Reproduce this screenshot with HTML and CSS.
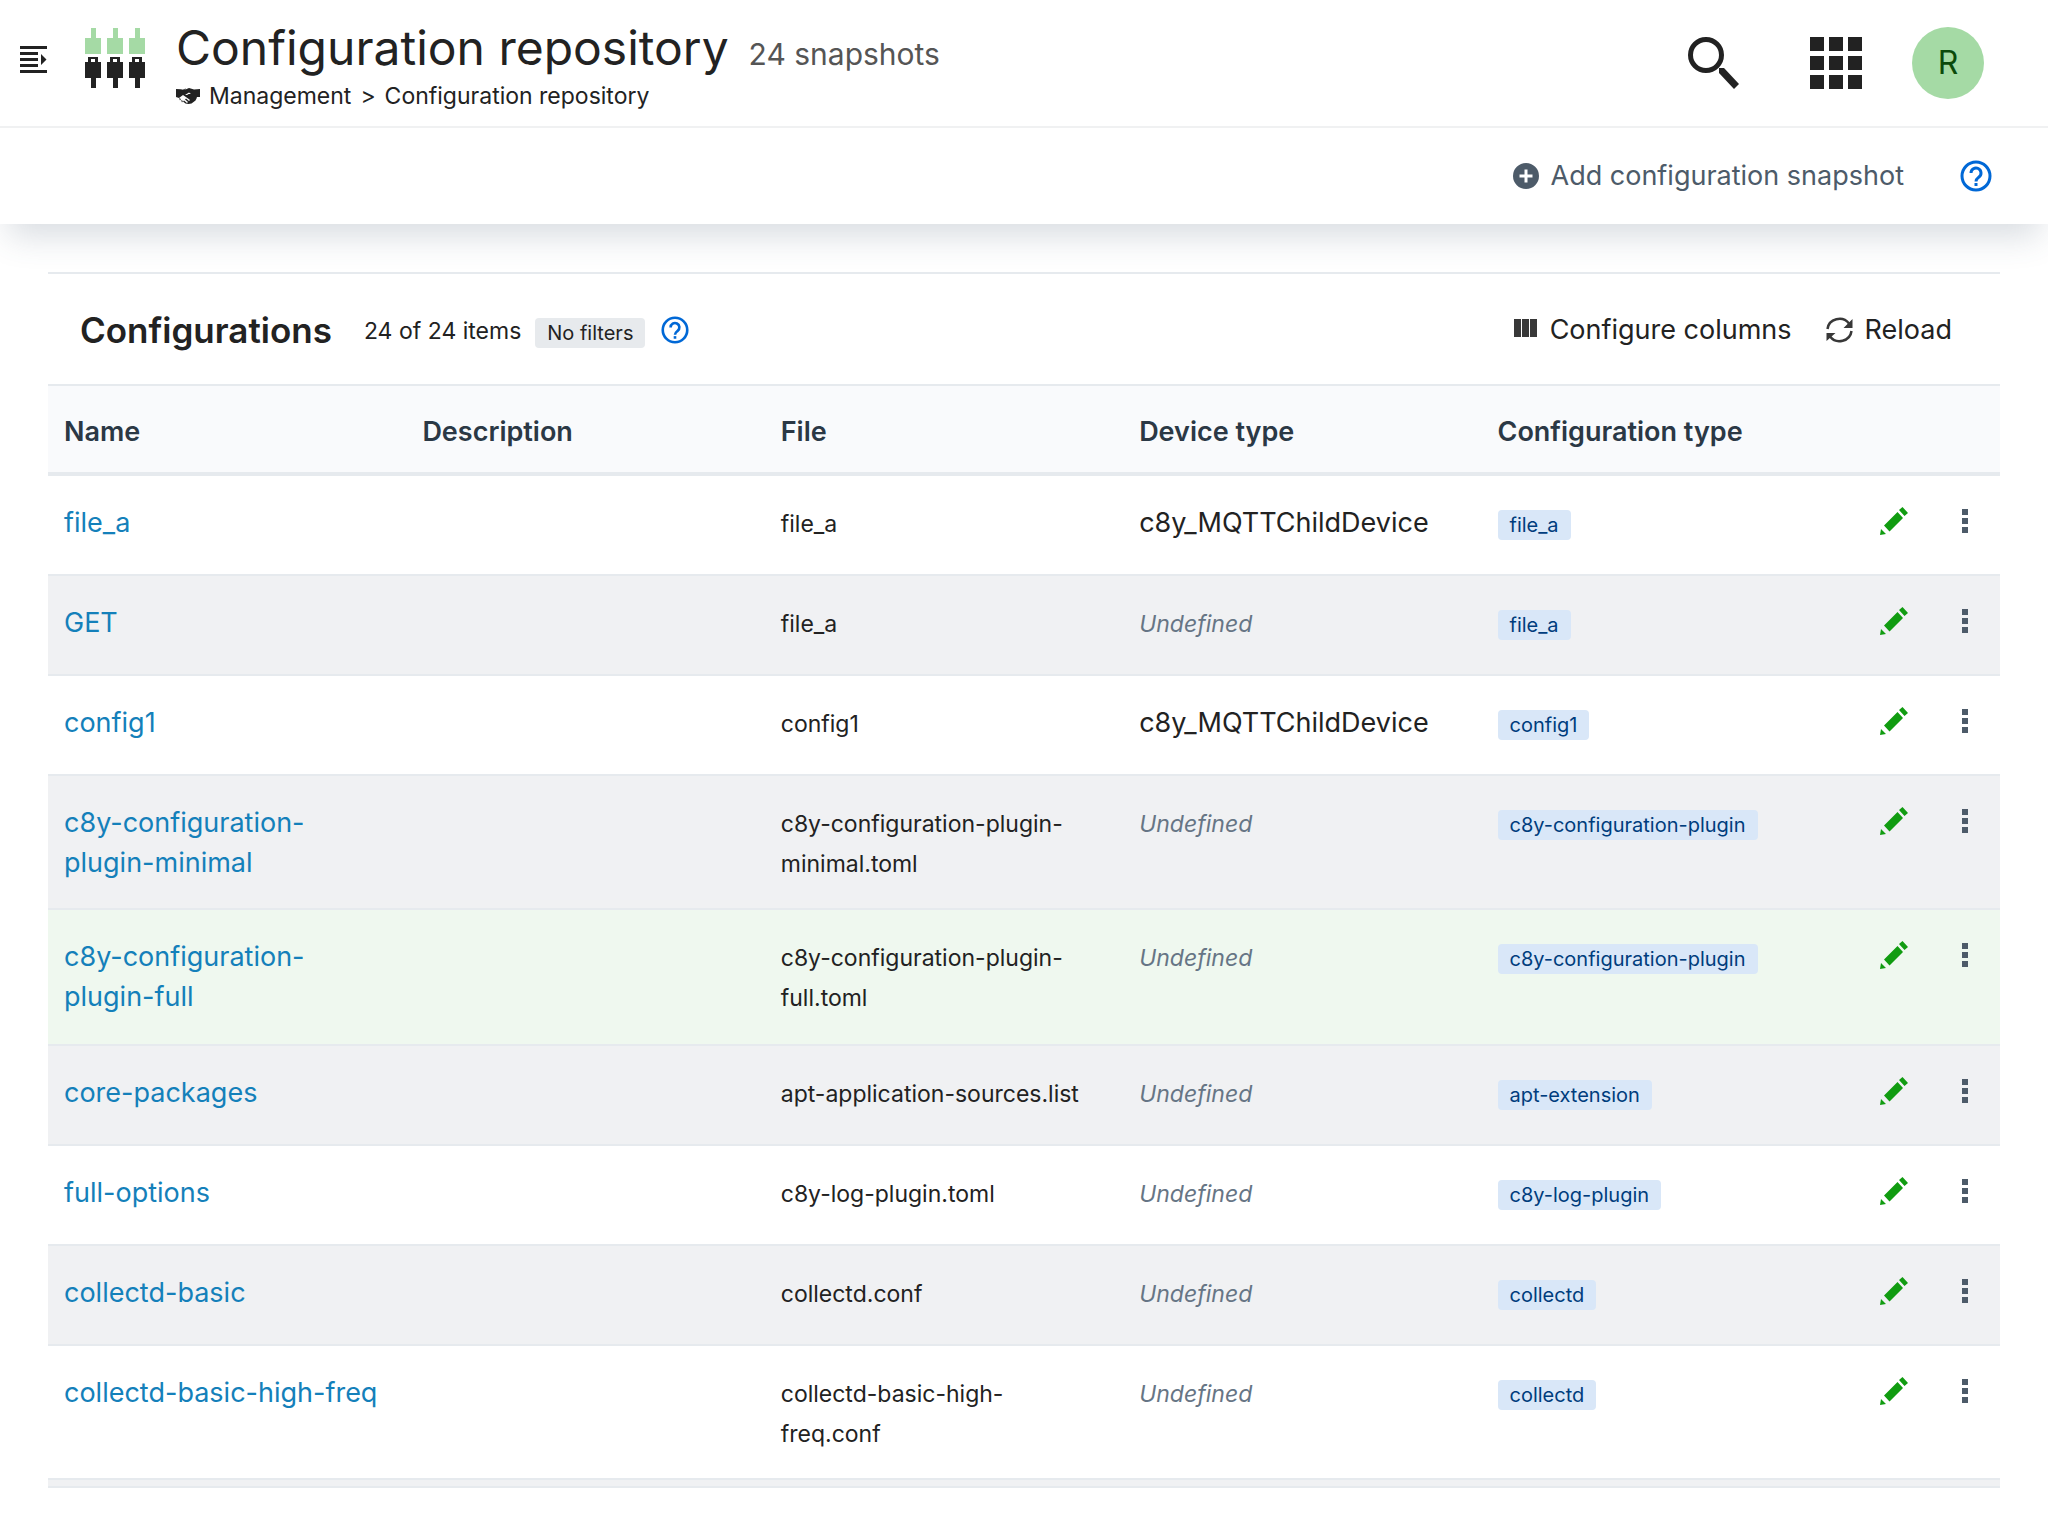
FILE: index.html
```html
<!DOCTYPE html>
<html lang="en">
<head>
<meta charset="utf-8">
<meta name="viewport" content="width=device-width, initial-scale=1">
<title>Configuration repository</title>
<link rel="stylesheet" href="styles.css">
</head>
<body>
<svg class="sprite" aria-hidden="true">
  <symbol id="i-pencil" viewBox="0 0 28 28"><path d="M22.500 0 28 6 24.500 9 19 3zM17.500 5 23 11 9.500 24.500 4 18.500zM1 22 6 27 0 28z"/></symbol>
  <symbol id="i-dots" viewBox="0 0 6 24"><path d="M0 0h6v6H0zM0 9h6v6H0zM0 18h6v6H0z"/></symbol>
  <symbol id="i-help" viewBox="0 0 32 32"><circle cx="16" cy="16" r="14" fill="none" stroke="currentColor" stroke-width="3"/><path d="M11 13a5 5 0 1 1 8 4c-2 1.500-3 2-3 4.500" fill="none" stroke="currentColor" stroke-width="3"/><path d="M14.500 23h3v3h-3z"/></symbol>
</svg>

<header class="top">
  <div class="appbar">
    <button class="icon-btn nav-toggle" aria-label="Toggle navigation">
      <svg width="27" height="27" viewBox="0 0 27 27"><path d="M0 0h27v3H0zM0 6h18v3H0zM0 12h18v3H0zM0 18h18v3H0zM0 24h27v3H0zM21 8l5.500 5.500L21 19z"/></svg>
    </button>
    <svg class="logo" width="61" height="60" viewBox="0 0 61 60" aria-hidden="true">
      <path class="logo-light" d="M6 0h5v10h5v16H0V10h6zM28 0h5v10h5v16H22V10h6zM50 0h5v10h5v16H44V10h6z"/>
      <path fill-rule="evenodd" d="M3 29h10v5h3v16h-5v10H6V50H0V34h3zm3 2v3h4v-3zM25 29h10v5h3v16h-5v10h-5V50h-6V34h3zm3 2v3h4v-3zM47 29h10v5h3v16h-5v10h-5V50h-6V34h3zm3 2v3h4v-3z"/>
    </svg>
    <div class="heading">
      <div class="title-row">
        <h1>Configuration repository</h1>
        <span class="subtitle">24 snapshots</span>
      </div>
      <nav class="crumbs" aria-label="Breadcrumb">
        <svg width="24" height="17" viewBox="0 0 24 17" aria-hidden="true"><path d="M0 1 5 2 10 .5 7 5 9 7l4-2.500 7 5.500 1-1 3 0V1L18 1.500 13 0 9.500 1.500 5 2 0 1v8l3 1 4-3 5 3.500 2 1.500-1 1-3-2.500-1 1 3 2.500-1 1-3-2.500-1 1 2.500 2 3 .5 3-.5 4-3 1.500-3-6-5-4 2.500-3-3L9.500 1.500z"/><path d="M3 10l2 1-1 1.500zM5 12l2 1-1 1.500z"/></svg>
        <span>Management</span><span>&gt;</span><span>Configuration repository</span>
      </nav>
    </div>
    <div class="tools">
      <button class="icon-btn" aria-label="Search">
        <svg width="52" height="52" viewBox="0 0 52 52"><circle cx="18" cy="18" r="15.500" fill="none" stroke="currentColor" stroke-width="5"/><path d="M31 31h5l15 16-5 5-15-16z"/></svg>
      </button>
      <button class="icon-btn" aria-label="Applications">
        <svg width="52" height="52" viewBox="0 0 52 52"><path d="M0 0h14v14H0zM19 0h14v14H19zM38 0h14v14H38zM0 19h14v14H0zM19 19h14v14H19zM38 19h14v14H38zM0 38h14v14H0zM19 38h14v14H19zM38 38h14v14H38z"/></svg>
      </button>
      <button class="avatar" aria-label="User menu">R</button>
    </div>
  </div>
  <div class="actionbar">
    <button class="text-btn add">
      <svg width="26" height="26" viewBox="0 0 26 26" aria-hidden="true"><path fill-rule="evenodd" d="M13 0a13 13 0 1 0 0 26 13 13 0 0 0 0-26zm-1.500 6.500h3v5h5v3h-5v5h-3v-5h-5v-3h5z"/></svg>
      Add configuration snapshot
    </button>
    <button class="icon-btn help" aria-label="Help"><svg width="32" height="32"><use href="#i-help"/></svg></button>
  </div>
</header>

<main class="grid">
  <div class="grid-head">
    <h2>Configurations</h2>
    <span class="count">24 of 24 items</span>
    <span class="tag tag-grey">No filters</span>
    <button class="icon-btn help" aria-label="Filter help"><svg width="28" height="28"><use href="#i-help"/></svg></button>
    <div class="grid-actions">
      <button class="text-btn">
        <svg class="dim" width="24" height="26" viewBox="0 0 24 26" aria-hidden="true"><path d="M0 2h7v18H0zM8 2h7v18H8zM16 2h7v18h-7z"/></svg>
        Configure columns
      </button>
      <button class="text-btn">
        <svg class="dim" width="27" height="26" viewBox="0 0 27 26" aria-hidden="true"><path d="M1.500 12A12 11.500 0 0 1 23 6.500M25.500 14A12 11.500 0 0 1 4 19.500" fill="none" stroke="currentColor" stroke-width="2.500"/><path d="M26.500 2v9h-9zM.5 24v-8h9z"/></svg>
        Reload
      </button>
    </div>
  </div>
  <table>
    <colgroup><col class="c"><col class="c"><col class="c"><col class="c"><col class="c"><col></colgroup>
    <thead><tr><th scope="col">Name</th><th scope="col">Description</th><th scope="col">File</th><th scope="col">Device type</th><th scope="col">Configuration type</th><td></td></tr></thead>
    <tbody>
      <tr><td><a href="#">file_a</a></td><td></td><td class="sm">file_a</td><td>c8y_MQTTChildDevice</td><td><span class="tag">file_a</span></td><td><div class="row-actions"><button class="icon-btn edit" aria-label="Edit"><svg width="28" height="28"><use href="#i-pencil"/></svg></button><button class="icon-btn more" aria-label="More"><svg width="6" height="24"><use href="#i-dots"/></svg></button></div></td></tr>
      <tr><td><a href="#">GET</a></td><td></td><td class="sm">file_a</td><td class="sm none">Undefined</td><td><span class="tag">file_a</span></td><td><div class="row-actions"><button class="icon-btn edit" aria-label="Edit"><svg width="28" height="28"><use href="#i-pencil"/></svg></button><button class="icon-btn more" aria-label="More"><svg width="6" height="24"><use href="#i-dots"/></svg></button></div></td></tr>
      <tr><td><a href="#">config1</a></td><td></td><td class="sm">config1</td><td>c8y_MQTTChildDevice</td><td><span class="tag">config1</span></td><td><div class="row-actions"><button class="icon-btn edit" aria-label="Edit"><svg width="28" height="28"><use href="#i-pencil"/></svg></button><button class="icon-btn more" aria-label="More"><svg width="6" height="24"><use href="#i-dots"/></svg></button></div></td></tr>
      <tr><td><a href="#">c8y-configuration-plugin-minimal</a></td><td></td><td class="sm">c8y-configuration-plugin-minimal.toml</td><td class="sm none">Undefined</td><td><span class="tag">c8y-configuration-plugin</span></td><td><div class="row-actions"><button class="icon-btn edit" aria-label="Edit"><svg width="28" height="28"><use href="#i-pencil"/></svg></button><button class="icon-btn more" aria-label="More"><svg width="6" height="24"><use href="#i-dots"/></svg></button></div></td></tr>
      <tr class="active"><td><a href="#">c8y-configuration-plugin-full</a></td><td></td><td class="sm">c8y-configuration-plugin-full.toml</td><td class="sm none">Undefined</td><td><span class="tag">c8y-configuration-plugin</span></td><td><div class="row-actions"><button class="icon-btn edit" aria-label="Edit"><svg width="28" height="28"><use href="#i-pencil"/></svg></button><button class="icon-btn more" aria-label="More"><svg width="6" height="24"><use href="#i-dots"/></svg></button></div></td></tr>
      <tr><td><a href="#">core-packages</a></td><td></td><td class="sm">apt-application-sources.list</td><td class="sm none">Undefined</td><td><span class="tag">apt-extension</span></td><td><div class="row-actions"><button class="icon-btn edit" aria-label="Edit"><svg width="28" height="28"><use href="#i-pencil"/></svg></button><button class="icon-btn more" aria-label="More"><svg width="6" height="24"><use href="#i-dots"/></svg></button></div></td></tr>
      <tr><td><a href="#">full-options</a></td><td></td><td class="sm">c8y-log-plugin.toml</td><td class="sm none">Undefined</td><td><span class="tag">c8y-log-plugin</span></td><td><div class="row-actions"><button class="icon-btn edit" aria-label="Edit"><svg width="28" height="28"><use href="#i-pencil"/></svg></button><button class="icon-btn more" aria-label="More"><svg width="6" height="24"><use href="#i-dots"/></svg></button></div></td></tr>
      <tr><td><a href="#">collectd-basic</a></td><td></td><td class="sm">collectd.conf</td><td class="sm none">Undefined</td><td><span class="tag">collectd</span></td><td><div class="row-actions"><button class="icon-btn edit" aria-label="Edit"><svg width="28" height="28"><use href="#i-pencil"/></svg></button><button class="icon-btn more" aria-label="More"><svg width="6" height="24"><use href="#i-dots"/></svg></button></div></td></tr>
      <tr><td><a href="#">collectd-basic-high-freq</a></td><td></td><td class="sm">collectd-basic-high-freq.conf</td><td class="sm none">Undefined</td><td><span class="tag">collectd</span></td><td><div class="row-actions"><button class="icon-btn edit" aria-label="Edit"><svg width="28" height="28"><use href="#i-pencil"/></svg></button><button class="icon-btn more" aria-label="More"><svg width="6" height="24"><use href="#i-dots"/></svg></button></div></td></tr>
      <tr class="end"><td colspan="6"></td></tr>
    </tbody>
  </table>
</main>
</body>
</html>
```
FILE: styles.css
```css
* { box-sizing: border-box; }
body {
  margin: 0;
  background: #fff;
  color: #222;
  font: 400 27px/40px Inter, "Liberation Sans", sans-serif;
}
svg { display: block; flex: none; fill: currentColor; }
button {
  margin: 0;
  padding: 0;
  border: 0;
  background: none;
  color: inherit;
  font: inherit;
  cursor: pointer;
}
.sprite { position: absolute; width: 0; height: 0; }

.top { background: #fff; box-shadow: 0 20px 32px -8px rgba(60, 80, 105, .2); }
.appbar {
  display: flex;
  align-items: center;
  height: 128px;
  padding: 0 64px 0 20px;
  border-bottom: 2px solid #f0f1f2;
}
.nav-toggle { margin-bottom: 8px; }
.logo { margin: 0 30px 10px 38px; }
.logo-light { fill: #a5daa5; }
.heading { padding-top: 4px; }
.title-row { display: flex; align-items: baseline; gap: 20px; }
h1 { margin: 0; font-size: 48px; line-height: 60px; font-weight: 400; }
.subtitle { font-size: 30px; color: #555; }
.crumbs { display: flex; align-items: center; gap: 9px; padding-top: 2px; font-size: 23px; line-height: 32px; }
.tools { display: flex; align-items: center; gap: 50px; margin-left: auto; }
.tools .icon-btn:first-child { margin-right: 20px; }
.avatar {
  width: 72px;
  height: 72px;
  border-radius: 50%;
  background: #a5daa5;
  color: #0b4a0b;
  font-size: 32px;
}
.actionbar {
  display: flex;
  align-items: center;
  justify-content: flex-end;
  gap: 56px;
  height: 96px;
  padding: 0 56px;
}
.text-btn { display: flex; align-items: center; gap: 12px; }
.add { color: #4d5b69; }
.dim { color: #383838; }
.help { color: #0068d6; }

.grid { margin: 48px; border-top: 2px solid #e6eaee; }
.grid-head { display: flex; align-items: center; height: 110px; padding: 2px 48px 0 32px; }
h2 { margin: 0 32px 0 0; font-size: 35px; font-weight: 600; }
.count { margin-right: 14px; padding-top: 2px; font-size: 23px; }
.grid-head .tag { margin-top: 6px; }
.grid-head .help { margin-left: 16px; }
.grid-actions { display: flex; gap: 34px; margin-left: auto; }
.tag {
  display: inline-block;
  padding: 0 12px;
  border-radius: 4px;
  background: #d9e7f8;
  color: #003d7d;
  font-size: 20px;
  line-height: 30px;
}
.tag-grey { background: #e7eaed; color: #222; }

table { width: 100%; table-layout: fixed; border-collapse: separate; border-spacing: 0; }
.c { width: 18.36%; }
th, td { padding: 27px 24px 25px 16px; border-bottom: 2px solid #e6eaee; text-align: left; vertical-align: top; }
thead th, thead td { padding: 26px 16px 20px; border-top: 2px solid #e6eaee; border-bottom-width: 4px; background: #f9fafc; color: #2b3845; font-weight: 600; }
tbody td { height: 100px; }
tbody td:last-child { padding-top: 25px; }
tbody tr:nth-child(even) { background: #f0f1f3; }
tbody tr.active { background: #eff8ef; }
tbody tr.active td { height: 136px; }
tbody tr.end td { height: 8px; padding: 0; }
a { color: #1480ba; text-decoration: none; }
.sm { padding-top: 28px; padding-bottom: 24px; font-size: 23px; }
.none { color: #667585; font-style: italic; }
.row-actions { display: flex; align-items: center; justify-content: flex-end; gap: 54px; height: 40px; padding-right: 8px; }
.edit { color: #119c11; }
.more { color: #4d5b69; }
```
